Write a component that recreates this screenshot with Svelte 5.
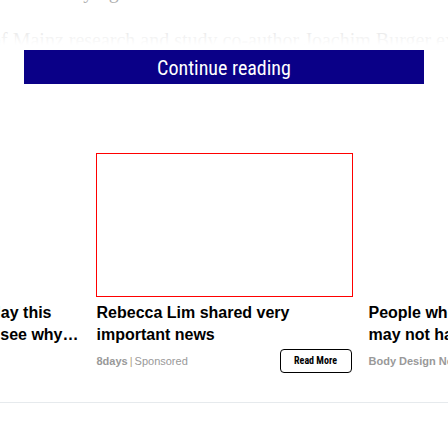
<script>
  const cards = [
    { title: ['Singapore: Seniors can play this', 'game for free, come and see why…'], source: 'Raid', end: true },
    { title: ['Rebecca Lim shared very', 'important news'], source: '8days', framed: true },
    { title: ['People who eat this fruit', 'may not have any more fat'], source: 'Body Design News' },
  ];
</script>

<main>
  <article>
    <p>from a varying source</p>
    <p>of Mainz research and study co-author Joachim Burger explained</p>
  </article>
  <div class="more">
    <button type="button">Continue reading</button>
  </div>

  <section>
    {#each cards as card}
      <div class="card" class:end={card.end}>
        <div class="thumb" class:framed={card.framed}></div>
        <h3>
          {#each card.title as line}
            <span>{line}</span>
          {/each}
        </h3>
        <footer>
          {#if !card.end}
            <span class="source"><b>{card.source}</b><i>|</i>Sponsored</span>
          {/if}
          {#if card.framed}
            <a href="#read">Read More</a>
          {/if}
        </footer>
      </div>
    {/each}
  </section>
</main>

<style>
  :global(body) {
    background: #fff;
  }
  main {
    overflow: hidden;
  }
  article {
    position: relative;
    display: flex;
    flex-direction: column;
    justify-content: flex-end;
    height: 50px;
    overflow: hidden;
    color: #333;
    font: 20px/20px "Liberation Serif", serif;
    white-space: nowrap;
  }
  article::after {
    content: '';
    position: absolute;
    inset: 0;
    background: linear-gradient(rgba(255, 255, 255, 0.6), rgba(255, 255, 255, 0.93) 72%, #fff 90%);
  }
  p {
    flex: none;
    margin: 0 -9px;
  }
  p:first-child {
    margin: 0 0 29px;
  }
  .more {
    padding: 0 24px;
  }
  button {
    display: block;
    width: 100%;
    height: 34px;
    padding: 0;
    border: 0;
    background: #0a0087;
    color: #fff;
    font: 20px/36px "Roboto Condensed", Roboto, sans-serif;
    text-align: center;
  }
  section {
    display: flex;
    justify-content: center;
    gap: 15px;
    padding: 69px 0 29px;
    border-bottom: 1px solid #e6eaed;
    font-family: "Liberation Sans", Arial, sans-serif;
  }
  .card {
    flex: none;
    width: 257px;
  }
  .thumb {
    box-sizing: border-box;
    height: 144px;
  }
  .framed {
    border: 1px solid #f00;
  }
  h3 {
    margin: 5px 0 3px;
    padding-left: 1px;
    color: #000;
    font-size: 16px;
    line-height: 22px;
    white-space: nowrap;
  }
  h3 span {
    display: block;
  }
  .end h3 {
    display: flex;
    flex-direction: column;
    align-items: flex-end;
    padding-right: 2px;
  }
  .end h3 span:first-child {
    padding-right: 27px;
  }
  footer {
    display: flex;
    justify-content: space-between;
    align-items: center;
    height: 24px;
    padding: 0 1px;
    color: #999;
    font-size: 11px;
    white-space: nowrap;
  }
  i {
    margin: 0 2px;
    color: #b0a080;
    font-style: normal;
  }
  a {
    box-sizing: border-box;
    width: 72px;
    height: 24px;
    border: 1px solid #000;
    border-radius: 4px;
    color: #000;
    font: bold 10px/22px "Roboto Condensed", Roboto, sans-serif;
    text-align: center;
    text-decoration: none;
  }
</style>
